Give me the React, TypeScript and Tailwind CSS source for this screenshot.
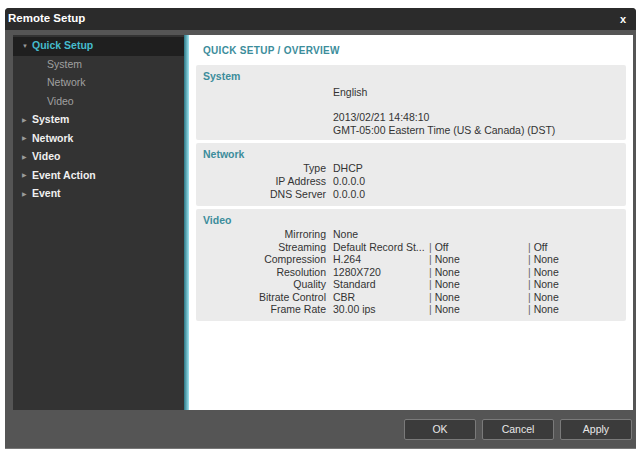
import React from "react";

const font = { fontFamily: '"Liberation Sans", Arial, sans-serif' };

const sideItems = [
  { label: "Quick Setup", open: true, active: true },
  { label: "System", sub: true },
  { label: "Network", sub: true },
  { label: "Video", sub: true },
  { label: "System" },
  { label: "Network" },
  { label: "Video" },
  { label: "Event Action" },
  { label: "Event" },
];

const videoRows = [
  ["Mirroring", "None", "", ""],
  ["Streaming", "Default Record St...", "Off", "Off"],
  ["Compression", "H.264", "None", "None"],
  ["Resolution", "1280X720", "None", "None"],
  ["Quality", "Standard", "None", "None"],
  ["Bitrate Control", "CBR", "None", "None"],
  ["Frame Rate", "30.00 ips", "None", "None"],
];

const Row = ({ label, value }: { label: string; value: string }) => (
  <div className="flex h-[13px] items-center">
    <div className="w-[130px] pr-[7px] text-right">{label}</div>
    <div>{value}</div>
  </div>
);

const Section = ({ title, children, className }: { title: string; children: React.ReactNode; className?: string }) => (
  <div className={"bg-[#ebebeb] rounded-[2px] px-[7px] " + (className || "")}>
    <div className="text-[#3c8d9b] font-bold text-[10.5px] leading-[13px]">{title}</div>
    {children}
  </div>
);

const App = () => {
  return (
    <div className="w-[640px] h-[454px] bg-white pt-[8px] pl-[5px] pr-[4px]" style={font}>
      <div className="h-[441px] bg-[#555] rounded-t-[4px] flex flex-col border-b border-[#777]">
        {/* title bar */}
        <div className="h-[22px] bg-[#2b2b2b] rounded-t-[4px] flex items-center justify-between pl-[3px] pr-[10px]">
          <span className="text-white font-bold text-[11.5px]">Remote Setup</span>
          <span className="text-white font-bold text-[11px]">x</span>
        </div>

        <div className="flex h-[375px] mt-[5px] pl-[8px] pr-[3px]">
          {/* sidebar */}
          <div className="w-[171px] bg-[#333] pt-[2px]">
            {sideItems.map((it, i) => (
              <div
                key={i}
                className={
                  "h-[18.5px] flex items-center text-[10.5px] " +
                  (it.active ? "bg-[#1f1f1f]" : "")
                }
              >
                {it.sub ? (
                  <span className="pl-[34px] text-[#a0a0a0]">{it.label}</span>
                ) : (
                  <>
                    <span className="w-[19px] pl-[9px] text-[6px] text-[#9a9a9a]">
                      {it.open ? "▼" : "▶"}
                    </span>
                    <span className={"font-bold " + (it.active ? "text-[#45bccd]" : "text-[#f0f0f0]")}>
                      {it.label}
                    </span>
                  </>
                )}
              </div>
            ))}
          </div>

          <div className="w-[5px] bg-gradient-to-r from-[#2a7785] to-[#9fe7f3]" />

          {/* content */}
          <div className="flex-1 bg-white px-[7px] text-[10.5px] text-[#333]">
            <div className="h-[30px] flex items-center pl-[7px] text-[#3c8d9b] font-bold text-[10px] tracking-[0.3px]">
              QUICK SETUP / OVERVIEW
            </div>

            <Section title="System" className="pt-[5px] h-[75px]">
              <div className="pt-[3px]">
                <Row label="" value="English" />
                <div className="h-[12px]" />
                <Row label="" value="2013/02/21 14:48:10" />
                <Row label="" value="GMT-05:00 Eastern Time (US & Canada) (DST)" />
              </div>
            </Section>

            <Section title="Network" className="mt-[3px] pt-[5px] h-[63px]">
              <div className="pt-[1px]">
                <Row label="Type" value="DHCP" />
                <Row label="IP Address" value="0.0.0.0" />
                <Row label="DNS Server" value="0.0.0.0" />
              </div>
            </Section>

            <Section title="Video" className="mt-[3px] pt-[5px] h-[112px]">
              <div className="pt-[2px]">
                {videoRows.map((r, i) => (
                  <div key={i} className="flex h-[12.5px] items-center">
                    <div className="w-[130px] pr-[7px] text-right">{r[0]}</div>
                    <div className="w-[96px]">{r[1]}</div>
                    {r[2] && (
                      <>
                        <div className="w-[99px]">
                          <span className="text-[#666]">|</span> {r[2]}
                        </div>
                        <div>
                          <span className="text-[#666]">|</span> {r[3]}
                        </div>
                      </>
                    )}
                  </div>
                ))}
              </div>
            </Section>
          </div>
        </div>

        {/* footer */}
        <div className="flex-1 flex items-center justify-end gap-[6px] pr-[4px] pt-[1px]">
          {["OK", "Cancel", "Apply"].map((b) => (
            <button
              key={b}
              className="w-[72px] h-[21px] bg-[#3b3b3b] border border-[#7a7a7a] rounded-[2px] text-[#e8e8e8] text-[10.5px]"
            >
              {b}
            </button>
          ))}
        </div>
      </div>
    </div>
  );
};

export default App;
